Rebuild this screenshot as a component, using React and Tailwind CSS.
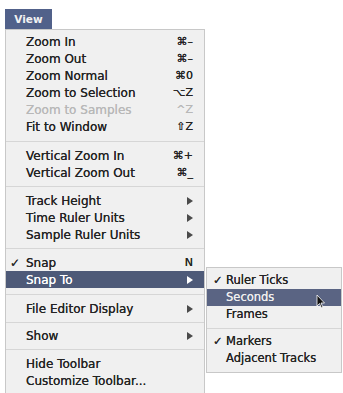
import React from "react";

const Arrow = ({ white }) => (
  <svg width="6" height="8" viewBox="0 0 6 8" className="block">
    <path d="M0 0 L6 4 L0 8 Z" fill={white ? "#ffffff" : "#4a4a4a"} />
  </svg>
);

const Check = ({ white }) => (
  <span className={white ? "text-white" : "text-[#2a2a2a]"}>✓</span>
);

function Row({ label, sc, arrow, check, disabled, hi }) {
  return (
    <div
      className={
        "h-[17px] flex items-center pr-[11px] [text-shadow:0_0_0.6px_currentColor] " +
        (hi ? "bg-[#4e5a78] text-white" : disabled ? "text-[#b8b8b8]" : "text-[#242424]")
      }
    >
      <div className="w-[20px] pl-[4px] text-[12px] leading-none">{check ? <Check white={hi} /> : null}</div>
      <div className="flex-1 text-[12px] leading-none whitespace-nowrap">{label}</div>
      {sc ? <div className="text-[11px] leading-none whitespace-nowrap">{sc}</div> : null}
      {arrow ? <Arrow white={hi} /> : null}
    </div>
  );
}

const Sep = ({ h }) => (
  <div className={"flex flex-col justify-center " + h}>
    <div className="h-px bg-[#d6d6d6]" />
  </div>
);

function SubRow({ label, check, hi }) {
  return (
    <div
      className={
        "h-[17px] flex items-center [text-shadow:0_0_0.6px_currentColor] " +
        (hi ? "bg-[#5a6483] text-[#eeeeee]" : "text-[#242424]")
      }
    >
      <div className="w-[19px] pl-[6px] text-[11.5px] leading-none">{check ? <Check white={hi} /> : null}</div>
      <div className="text-[11.5px] leading-none whitespace-nowrap">{label}</div>
    </div>
  );
}

export default function App() {
  return (
    <div
      className="relative w-[343px] h-[393px] bg-white overflow-hidden"
      style={{ fontFamily: '"DejaVu Sans", "Liberation Sans", sans-serif' }}
    >
      <div className="ml-[5px] mt-[9px] w-[47px] h-[20px] bg-[#51618a] flex items-center justify-center text-[#f2f2f2] text-[10.5px] font-bold leading-none">
        View
      </div>
      <div className="ml-[5px] w-[200px] h-[370px] bg-[#f0f0f0] border-l border-t border-r border-[#c8c8c8] pt-[3px]">
        <Row label="Zoom In" sc="⌘–" />
        <Row label="Zoom Out" sc="⌘–" />
        <Row label="Zoom Normal" sc="⌘0" />
        <Row label="Zoom to Selection" sc="⌥Z" />
        <Row label="Zoom to Samples" sc="^Z" disabled />
        <Row label="Fit to Window" sc="⇧Z" />
        <Sep h="h-[12px]" />
        <Row label="Vertical Zoom In" sc="⌘+" />
        <Row label="Vertical Zoom Out" sc="⌘_" />
        <Sep h="h-[11px]" />
        <Row label="Track Height" arrow />
        <Row label="Time Ruler Units" arrow />
        <Row label="Sample Ruler Units" arrow />
        <Sep h="h-[11px]" />
        <Row label="Snap" sc="N" check />
        <Row label="Snap To" arrow hi />
        <Sep h="h-[12px]" />
        <Row label="File Editor Display" arrow />
        <Sep h="h-[10px]" />
        <Row label="Show" arrow />
        <Sep h="h-[11px]" />
        <Row label="Hide Toolbar" />
        <Row label="Customize Toolbar..." />
      </div>

      <div className="absolute left-[206px] top-[267px] w-[136px] bg-[#f0f0f0] border border-[#c8c8c8] pt-[4px] pb-[5px]">
        <SubRow label="Ruler Ticks" check />
        <SubRow label="Seconds" hi />
        <SubRow label="Frames" />
        <Sep h="h-[10px]" />
        <SubRow label="Markers" check />
        <SubRow label="Adjacent Tracks" />
      </div>

      <svg className="absolute left-[316px] top-[294px]" width="10" height="15" viewBox="0 0 10 15">
        <path d="M1 1 L1 12 L3.5 9.5 L5.5 14 L7 13.3 L5 9 L8.5 9 Z" fill="#111" stroke="#fff" strokeWidth="0.8" />
      </svg>
    </div>
  );
}
